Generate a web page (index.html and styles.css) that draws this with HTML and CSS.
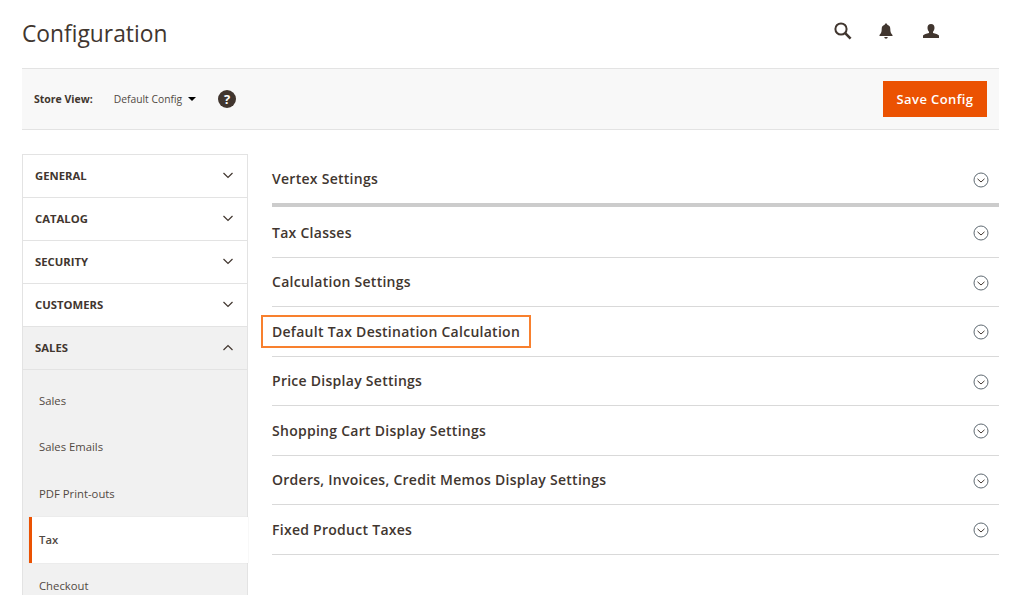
FILE: index.html
```html
<!DOCTYPE html>
<html>
<head>
<meta charset="utf-8">
<title>Configuration</title>
<link rel="stylesheet" href="styles.css">
</head>
<body>

<div class="m_hdr">
<h1>Configuration</h1>
<div class="hdr_icons">
<svg width="20" height="20" viewBox="0 0 20 20"><circle cx="8" cy="8" r="5.6" fill="none" stroke="#41362f" stroke-width="2"/><path d="M12.2 12.2L17.6 17.6" stroke="#41362f" stroke-width="2.6"/></svg>
<svg class="bell" width="16" height="18" viewBox="0 0 16 18"><path d="M8 1.5c.8 0 1.2.5 1.3 1.2 2.2.6 3 2.3 3 4.3 0 3 .6 4.500 2.200 6v1H1.500v-1c1.600-1.500 2.200-3 2.200-6 0-2 .8-3.700 3-4.300C6.800 2 7.200 1.500 8 1.500z" fill="#41362f"/><path d="M6.300 15h3.400c0 1-.8 1.700-1.700 1.700S6.300 16 6.300 15z" fill="#41362f"/></svg>
<svg width="18" height="17" viewBox="0 0 18 17"><path d="M9 1c2.300 0 3.500 1.500 3.500 3.700 0 1.700-.7 3.200-1.500 4v1.300c2.500.8 5 1.300 6 2.500V15H1v-2.500c1-1.200 3.500-1.700 6-2.500V8.700c-.8-.8-1.500-2.300-1.500-4C5.500 2.500 6.700 1 9 1z" fill="#41362f"/></svg>
</div>
</div>

<div class="m_bar">
<span class="bar_lbl">Store View:</span>
<span class="bar_val">Default Config</span>
<span class="bar_caret"></span>
<span class="bar_help">?</span>
<a class="btn_save">Save Config</a>
</div>

<div class="m_body">

<div class="s_nav">
<div class="s_sec"><span>GENERAL</span><svg class="chev" width="12" height="7" viewBox="0 0 12 7"><path d="M1.500 1l4.500 4.500L10.500 1" fill="none" stroke="#41362f" stroke-width="1.200"/></svg></div>
<div class="s_sec"><span>CATALOG</span><svg class="chev" width="12" height="7" viewBox="0 0 12 7"><path d="M1.500 1l4.500 4.500L10.500 1" fill="none" stroke="#41362f" stroke-width="1.200"/></svg></div>
<div class="s_sec"><span>SECURITY</span><svg class="chev" width="12" height="7" viewBox="0 0 12 7"><path d="M1.500 1l4.500 4.500L10.500 1" fill="none" stroke="#41362f" stroke-width="1.200"/></svg></div>
<div class="s_sec"><span>CUSTOMERS</span><svg class="chev" width="12" height="7" viewBox="0 0 12 7"><path d="M1.500 1l4.500 4.500L10.500 1" fill="none" stroke="#41362f" stroke-width="1.200"/></svg></div>
<div class="s_sec open"><span>SALES</span><svg class="chev" width="12" height="7" viewBox="0 0 12 7"><path d="M1.500 6l4.500-4.500L10.500 6" fill="none" stroke="#41362f" stroke-width="1.200"/></svg></div>
<div class="s_items">
<div>Sales</div>
<div>Sales Emails</div>
<div>PDF Print-outs</div>
<div class="cur">Tax</div>
<div>Checkout</div>
</div>
</div>

<div class="c_list">
<div class="c_row first"><span>Vertex Settings</span><svg class="circ" width="16" height="16" viewBox="0 0 16 16"><circle cx="8" cy="8" r="7" fill="none" stroke="#5f6a72" stroke-width="1"/><path d="M4.500 6.800L8 10l3.500-3.200" fill="none" stroke="#41362f" stroke-width="1"/></svg></div>
<div class="c_row"><span>Tax Classes</span><svg class="circ" width="16" height="16" viewBox="0 0 16 16"><circle cx="8" cy="8" r="7" fill="none" stroke="#5f6a72" stroke-width="1"/><path d="M4.500 6.800L8 10l3.500-3.200" fill="none" stroke="#41362f" stroke-width="1"/></svg></div>
<div class="c_row"><span>Calculation Settings</span><svg class="circ" width="16" height="16" viewBox="0 0 16 16"><circle cx="8" cy="8" r="7" fill="none" stroke="#5f6a72" stroke-width="1"/><path d="M4.500 6.800L8 10l3.500-3.200" fill="none" stroke="#41362f" stroke-width="1"/></svg></div>
<div class="c_row"><span class="mark">Default Tax Destination Calculation</span><svg class="circ" width="16" height="16" viewBox="0 0 16 16"><circle cx="8" cy="8" r="7" fill="none" stroke="#5f6a72" stroke-width="1"/><path d="M4.500 6.800L8 10l3.500-3.200" fill="none" stroke="#41362f" stroke-width="1"/></svg></div>
<div class="c_row"><span>Price Display Settings</span><svg class="circ" width="16" height="16" viewBox="0 0 16 16"><circle cx="8" cy="8" r="7" fill="none" stroke="#5f6a72" stroke-width="1"/><path d="M4.500 6.800L8 10l3.500-3.200" fill="none" stroke="#41362f" stroke-width="1"/></svg></div>
<div class="c_row"><span>Shopping Cart Display Settings</span><svg class="circ" width="16" height="16" viewBox="0 0 16 16"><circle cx="8" cy="8" r="7" fill="none" stroke="#5f6a72" stroke-width="1"/><path d="M4.500 6.800L8 10l3.500-3.200" fill="none" stroke="#41362f" stroke-width="1"/></svg></div>
<div class="c_row"><span>Orders, Invoices, Credit Memos Display Settings</span><svg class="circ" width="16" height="16" viewBox="0 0 16 16"><circle cx="8" cy="8" r="7" fill="none" stroke="#5f6a72" stroke-width="1"/><path d="M4.500 6.800L8 10l3.500-3.200" fill="none" stroke="#41362f" stroke-width="1"/></svg></div>
<div class="c_row"><span>Fixed Product Taxes</span><svg class="circ" width="16" height="16" viewBox="0 0 16 16"><circle cx="8" cy="8" r="7" fill="none" stroke="#5f6a72" stroke-width="1"/><path d="M4.500 6.800L8 10l3.500-3.200" fill="none" stroke="#41362f" stroke-width="1"/></svg></div>
</div>

</div>

</body>
</html>
```

FILE: styles.css
```css
html, body {margin:0;padding:0;height:595px;overflow:hidden;background:#fff;}
body {font-family:"Open Sans", sans-serif;color:#41362f;}

.m_hdr {display:flex;align-items:center;height:68px;margin:0 25px 0 22px;}
.m_hdr h1 {margin:0;font-size:22.800px;font-weight:400;color:#41362f;flex:1;position:relative;top:-1px;}
.hdr_icons {display:flex;align-items:center;gap:26px;margin-right:59px;position:relative;top:-3px;}
.hdr_icons .bell {margin:0 2px 0 -1px;}

.m_bar {display:flex;align-items:center;height:60px;margin:0 25px 0 22px;padding:0 12px;background:#f8f8f8;border-top:1px solid #e3e3e3;border-bottom:1px solid #e3e3e3;}
.bar_lbl {font-size:10.500px;font-weight:700;margin:0 21px 1px 0;}
.bar_val {font-size:10.300px;color:#514943;margin:0 6px 1px 0;}
.bar_caret {width:0;height:0;border:4px solid transparent;border-top:4px solid #000;border-bottom:none;margin-right:22px;}
.bar_help {width:18px;height:18px;line-height:18px;border-radius:50%;background:#41362f;color:#fff;font-size:13px;font-weight:700;text-align:center;}
.btn_save {margin-left:auto;width:104px;height:36px;line-height:36px;text-align:center;background:#eb5202;color:#fff;font-size:13px;font-weight:600;letter-spacing:.4px;}

.m_body {display:flex;margin:24px 25px 0 22px;}

.s_nav {width:226px;flex:none;border:1px solid #e3e3e3;border-bottom:none;box-sizing:border-box;}
.s_sec {display:flex;align-items:center;justify-content:space-between;height:42px;padding:0 13px 0 12px;border-bottom:1px solid #e3e3e3;font-size:11.300px;font-weight:700;color:#41362f;}
.s_sec > span {margin-bottom:1px;}
.s_sec > .chev {margin-bottom:1px;}
.s_sec.open {background:#f1f1f1;}
.s_items {background:#f1f1f1;padding-top:7.500px;}
.s_items > div {height:46.500px;line-height:46.500px;padding-left:16px;box-sizing:border-box;font-size:11.300px;color:#514943;}
.s_items > .cur {height:46px;line-height:46px;margin-left:6px;padding-left:7px;margin-right:-1px;background:#fff;border-left:3px solid #eb5202;font-weight:600;box-shadow:0 0 1px #d5d5d5;}

.c_list {flex:1;margin-left:24px;}
.c_row {display:flex;align-items:center;justify-content:space-between;box-sizing:border-box;height:49.500px;padding:0 10px 0 0;border-bottom:1px solid #d9d9d9;font-size:14px;font-weight:600;letter-spacing:.27px;color:#41362f;}
.c_row .circ {margin-top:2px;}
.c_row.first {height:53px;margin-bottom:1px;border-bottom:4px solid #cccccc;}
.mark {position:relative;}
.mark::after {content:"";position:absolute;left:-11px;right:-11px;top:-7px;bottom:-7px;border:2px solid #f8802e;}
```
